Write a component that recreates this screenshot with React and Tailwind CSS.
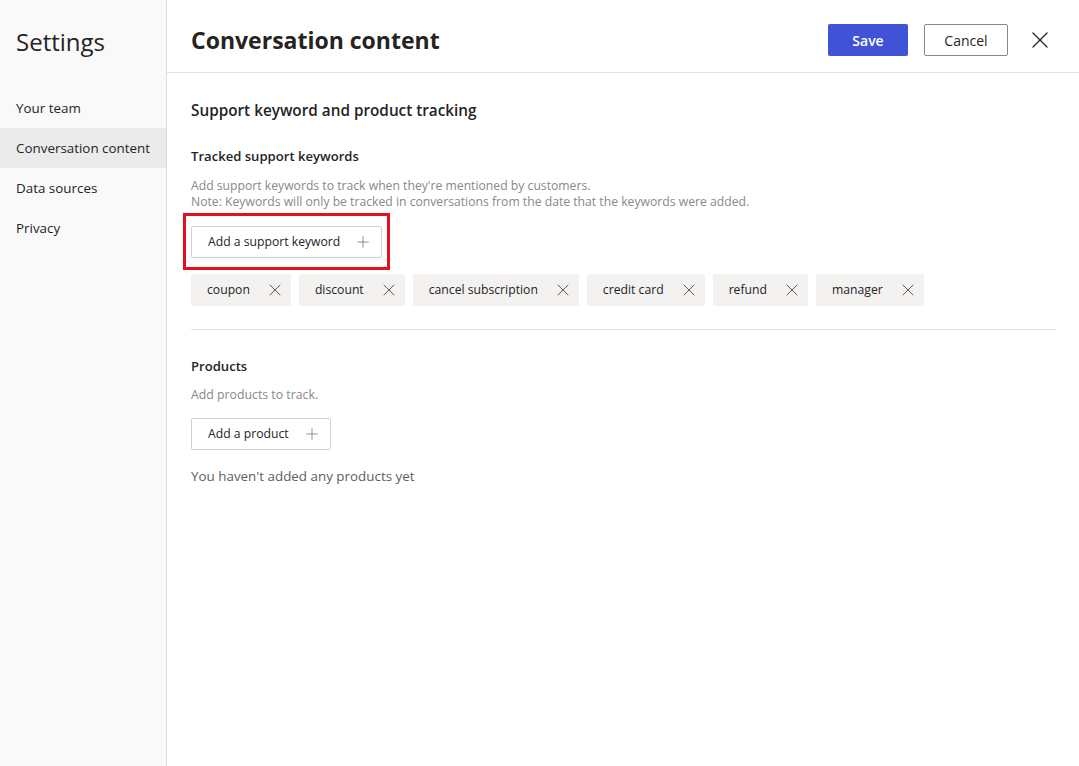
import { X, Plus } from 'lucide-react';

const keywords = ['coupon', 'discount', 'cancel subscription', 'credit card', 'refund', 'manager'];
const navItems = ['Your team', 'Conversation content', 'Data sources', 'Privacy'];

function AddButton({ label }) {
  return (
    <button className="flex h-8 items-center gap-[14px] rounded-[2px] border border-[#d1d1d1] bg-white pl-4 pr-[9px] text-[12.2px] text-[#252423]">
      <span>{label}</span>
      <Plus size={18} strokeWidth={1} className="text-[#6b6b8a]" />
    </button>
  );
}

export default function App() {
  const active = 'Conversation content';

  return (
    <div
      className="flex h-[766px] w-full overflow-hidden bg-white text-[#252423]"
      style={{ fontFamily: '"Open Sans", "Noto Sans", sans-serif' }}
    >
      <aside className="w-[167px] shrink-0 border-r border-[#dcdcdc] bg-[#f9f9f9]">
        <h1 className="px-4 pt-[26px] pb-[30px] text-[24px] leading-8 text-[#252423]">Settings</h1>
        <nav className="flex flex-col">
          {navItems.map((item) => (
            <div
              key={item}
              className={`flex h-10 items-center whitespace-nowrap px-4 text-[13.4px] ${item === active ? 'bg-[#ebebeb]' : ''}`}
            >
              {item}
            </div>
          ))}
        </nav>
      </aside>

      <main className="flex flex-1 flex-col">
        <header className="flex h-[73px] items-center justify-between border-b border-[#e1e1e1] pt-2 pl-6 pr-[25px]">
          <h2 className="text-[23px] font-bold text-[#252423]">Conversation content</h2>
          <div className="flex items-center">
            <button className="h-8 w-20 rounded-[2px] bg-[#4052d6] text-[14px] font-semibold text-white">Save</button>
            <button className="ml-4 h-8 w-[84px] rounded-[2px] border border-[#8a8886] bg-white text-[14px] text-[#252423]">
              Cancel
            </button>
            <X size={28} strokeWidth={1.1} className="ml-[18px] text-[#252423]" />
          </div>
        </header>

        <section className="px-6 pr-[23px] pt-[25px]">
          <h3 className="text-[15.3px] font-semibold leading-6 text-[#252423]">Support keyword and product tracking</h3>

          <h4 className="mt-[24px] text-[13.1px] font-semibold leading-5">Tracked support keywords</h4>
          <p className="mt-[12px] text-[12.2px] leading-4 text-[#8a8886]">
            Add support keywords to track when they're mentioned by customers.
            <br />
            Note: Keywords will only be tracked in conversations from the date that the keywords were added.
          </p>

          <div className="relative mt-4 w-fit">
            <div className="pointer-events-none absolute -inset-x-[8px] -top-[13px] -bottom-[12px] border-[3px] border-[#e3111f]" />
            <AddButton label="Add a support keyword" />
          </div>

          <div className="mt-[16px] flex flex-wrap gap-2">
            {keywords.map((k) => (
              <div
                key={k}
                className="flex h-8 items-center gap-[15px] rounded-[2px] bg-[#f3f2f1] pl-4 pr-[6px] text-[12.2px] text-[#252423]"
              >
                <span>{k}</span>
                <X size={20} strokeWidth={1.2} className="text-[#605e5c]" />
              </div>
            ))}
          </div>

          <div className="mt-[23px] border-t border-[#e1e1e1]" />

          <h4 className="mt-[26px] text-[13.1px] font-semibold leading-5">Products</h4>
          <p className="mt-[11px] text-[12.3px] leading-4 text-[#8a8886]">Add products to track.</p>

          <div className="mt-[15px]">
            <AddButton label="Add a product" />
          </div>

          <p className="mt-[16px] text-[13.4px] leading-5 text-[#605e5c]">You haven't added any products yet</p>
        </section>
      </main>
    </div>
  );
}
